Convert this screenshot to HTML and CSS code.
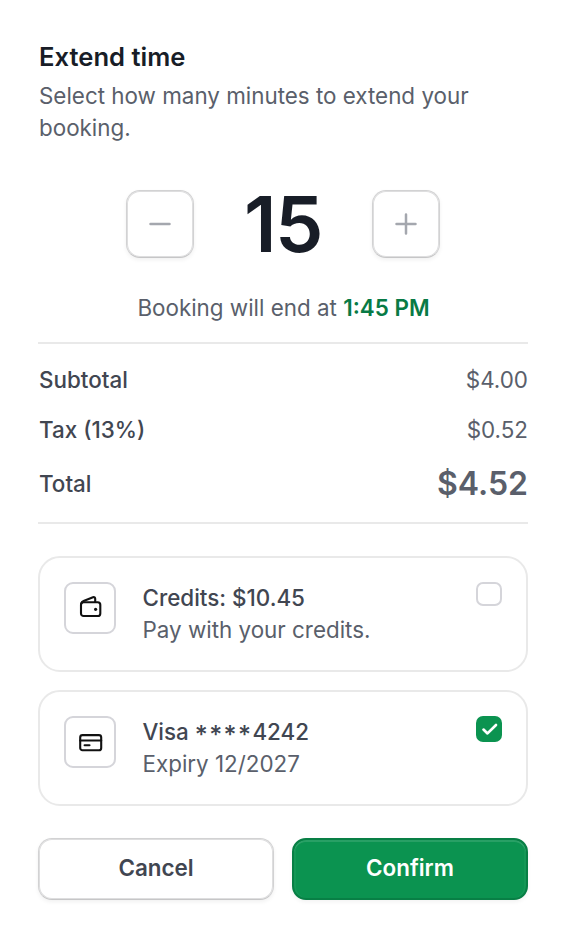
FILE: index.html
```html
<!DOCTYPE html>
<html lang="en">
<head>
<meta charset="utf-8">
<title>Extend time</title>
<link rel="stylesheet" href="styles.css">
</head>
<body>
<main class="dialog">
  <header class="heading">
    <h1 class="title">Extend time</h1>
    <p class="description">Select how many minutes to extend your booking.</p>
  </header>
  <div class="stepper">
    <button class="step" aria-label="Decrease">
      <svg width="24" height="24" viewBox="0 0 24 24"><path d="M2.5 12H21.5"/></svg>
    </button>
    <output class="minutes">15</output>
    <button class="step" aria-label="Increase">
      <svg width="24" height="24" viewBox="0 0 24 24"><path d="M2.5 12H21.5M12 2.5V21.5"/></svg>
    </button>
  </div>
  <p class="ending">Booking will end at <strong class="time">1:45 PM</strong></p>
  <dl class="summary">
    <div class="line"><dt>Subtotal</dt><dd>$4.00</dd></div>
    <div class="line"><dt>Tax (13%)</dt><dd>$0.52</dd></div>
    <div class="line total"><dt>Total</dt><dd>$4.52</dd></div>
  </dl>
  <div class="methods">
    <label class="method">
      <span class="badge">
        <svg width="26" height="26" viewBox="0 0 26 26"><rect x="4" y="7.2" width="19.3" height="13.8" rx="2.6"/><path d="M4.2 8.6C4.6 7.2 5.4 6.5 6.6 6L16 2.3C17.4 1.8 18.2 2.5 18.2 3.8V7"/><circle class="dot" cx="18.6" cy="14.3" r="1.6"/></svg>
      </span>
      <span class="details"><b class="name">Credits: $10.45</b><span>Pay with your credits.</span></span>
      <span class="check"></span>
    </label>
    <label class="method">
      <span class="badge">
        <svg width="26" height="26" viewBox="0 0 26 26"><rect x="3.2" y="6.1" width="21" height="15.1" rx="2.3"/><path d="M3.2 11.5H24.2M7.6 16.2H12.5"/></svg>
      </span>
      <span class="details"><b class="name">Visa <span class="mask">****</span>4242</b><span>Expiry 12/2027</span></span>
      <span class="check checked">
        <svg width="26" height="26" viewBox="0 0 26 26"><path d="M7.5 13.6L11.5 17.4L20 9"/></svg>
      </span>
    </label>
  </div>
  <footer class="actions">
    <button class="button">Cancel</button>
    <button class="button primary">Confirm</button>
  </footer>
</main>
</body>
</html>
```
FILE: styles.css
```css
* {
  box-sizing: border-box;
}

body {
  margin: 0;
  background: #fff;
  color: #5a5f6b;
  font: 400 22.4px/32px Inter, "Liberation Sans", sans-serif;
}

h1, p, dl, dd {
  margin: 0;
}

button {
  font: inherit;
  padding: 0;
}

svg {
  display: block;
  fill: none;
  stroke: currentColor;
  stroke-width: 2.1;
  stroke-linecap: round;
  stroke-linejoin: round;
}

.dialog {
  display: flex;
  flex-direction: column;
  padding: 40px 38px 38px;
}

.heading {
  padding: 0 1px;
}

.title {
  margin-bottom: 6px;
  color: #181d27;
  font-size: 25.6px;
  font-weight: 600;
  line-height: 34px;
}

.stepper {
  display: flex;
  justify-content: center;
  align-items: center;
  gap: 50px;
  height: 68px;
  margin-top: 46px;
}

.step {
  display: grid;
  place-items: center;
  width: 68px;
  height: 68px;
  border: 1px solid #d2d2d3;
  border-bottom-color: #c6c6c7;
  border-radius: 14px;
  background: #fff;
  color: #a4a7ae;
  box-shadow: 0 2px 4px rgba(10, 13, 18, 0.06), inset 0 0 0 1px #dededf;
}

.step svg {
  stroke-width: 2.5;
}

.minutes {
  width: 78px;
  color: #181d27;
  font-size: 77px;
  font-weight: 600;
  line-height: 68px;
  letter-spacing: -1.5px;
  text-align: center;
}

.ending {
  margin-top: 34px;
  padding-left: 1px;
  text-align: center;
}

.time {
  color: #087a45;
  font-weight: 600;
}

.summary {
  margin-top: 18px;
  padding: 20px 0 18px 1px;
  border: solid #e9e9e9;
  border-width: 2px 0;
}

.line {
  display: flex;
  justify-content: space-between;
  align-items: center;
  height: 32px;
  margin-bottom: 18px;
}

.line dt,
.name {
  color: #414651;
  font-weight: 500;
}

.mask {
  font-size: 25px;
  line-height: 0;
  letter-spacing: 1.4px;
  vertical-align: -4px;
}

.total {
  height: 40px;
  margin-bottom: 0;
}

.total dd {
  font-size: 32px;
  font-weight: 600;
}

.methods {
  display: grid;
  gap: 18px;
  margin-top: 32px;
}

.method {
  display: flex;
  align-items: flex-start;
  height: 116px;
  padding: 24px;
  border: 2px solid #e9e9e9;
  border-radius: 22px;
}

.badge {
  display: grid;
  place-items: center;
  width: 52px;
  height: 52px;
  border: 2px solid #d5d5da;
  border-radius: 9px;
  color: #111;
}

.dot {
  fill: currentColor;
  stroke: none;
}

.details {
  display: grid;
  grid-template-rows: 32px 32px;
  flex: 1;
  margin-left: 26.5px;
}

.check {
  width: 26px;
  height: 24px;
  border: 2px solid #d5d5da;
  border-radius: 7px;
}

.checked {
  height: 26px;
  border: 0;
  background: #0b9350;
  color: #fff;
}

.checked svg {
  stroke-width: 2.7;
}

.actions {
  display: grid;
  grid-template-columns: 1fr 1fr;
  gap: 18px;
  margin-top: 32px;
}

.button {
  height: 62px;
  padding-bottom: 2px;
  border: 1px solid #d2d2d3;
  border-bottom-color: #c6c6c7;
  border-radius: 14px;
  background: #fff;
  color: #414651;
  font-weight: 600;
  box-shadow: 0 2px 4px rgba(10, 13, 18, 0.06), inset 0 0 0 1px #dededf;
}

.primary {
  border: 2px solid #087f45;
  background: #0b9350;
  color: #fff;
  box-shadow: 0 2px 4px rgba(10, 13, 18, 0.05), inset 0 2px 0 rgba(255, 255, 255, 0.12), inset 2px 0 0 rgba(255, 255, 255, 0.04), inset -2px 0 0 rgba(255, 255, 255, 0.04);
}
```
